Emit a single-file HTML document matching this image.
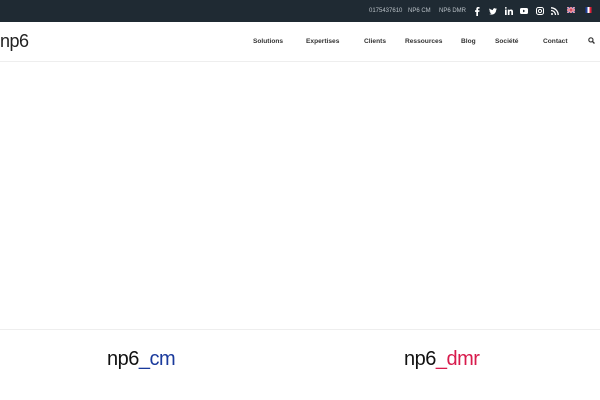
<!DOCTYPE html>
<html><head><meta charset="utf-8"><style>
*{margin:0;padding:0;box-sizing:border-box}
body{width:600px;height:400px;background:#fff;font-family:"Liberation Sans",sans-serif;position:relative;overflow:hidden}
.top{position:absolute;left:0;top:0;width:600px;height:22px;background:#1f2a33;color:#b9c0c6;font-size:6px}
.top span{position:absolute;top:7.5px}
.hdr{position:absolute;left:0;top:22px;width:600px;height:40px;border-bottom:1px solid #eee}
.nav{position:absolute;top:15px;font-size:6.6px;font-weight:bold;color:#333}
.logo{position:absolute;font-weight:300;letter-spacing:-0.5px}
.foot{position:absolute;left:0;top:329px;width:600px;border-top:1px solid #eee}
</style></head><body>
<div class="top">
<span style="left:369px">0175437610</span>
<span style="left:408px">NP6 CM</span>
<span style="left:439px">NP6 DMR</span>
<svg style="position:absolute;left:474px;top:7px" width="6" height="9" viewBox="0 0 6 9"><path d="M4 0H5.5V1.6H4.5C4.2 1.6 4 1.8 4 2.1V3.3H5.5L5.3 4.9H4V9H2.3V4.9H1V3.3H2.3V2C2.3 .8 3 0 4 0Z" fill="#fff"/></svg>
<svg style="position:absolute;left:489px;top:8px" width="8" height="7" viewBox="0 0 24 20"><path d="M24 2.4a10 10 0 0 1-2.8.8A5 5 0 0 0 23.3.4a10 10 0 0 1-3.1 1.2A4.9 4.9 0 0 0 11.8 6 14 14 0 0 1 1.7.9a4.9 4.9 0 0 0 1.5 6.6A4.9 4.9 0 0 1 1 6.9a4.9 4.9 0 0 0 3.9 4.8 5 5 0 0 1-2.2.1 4.9 4.9 0 0 0 4.6 3.4A9.9 9.9 0 0 1 0 17.3 14 14 0 0 0 7.5 19.5c9 0 14-7.5 14-14v-.6A10 10 0 0 0 24 2.4z" fill="#fff"/></svg>
<svg style="position:absolute;left:505px;top:7px" width="8" height="8" viewBox="0 0 8 8"><rect x="0" y="2.6" width="1.7" height="5.4" fill="#fff"/><circle cx=".85" cy=".9" r=".9" fill="#fff"/><path d="M2.8 2.6H4.4V3.4C4.7 2.8 5.4 2.5 6.1 2.5 7.5 2.5 8 3.3 8 4.8V8H6.3V5.2C6.3 4.5 6.1 4 5.5 4 4.9 4 4.5 4.4 4.5 5.2V8H2.8Z" fill="#fff"/></svg>
<svg style="position:absolute;left:520px;top:8px" width="8" height="6" viewBox="0 0 8 6"><rect width="8" height="6" rx="1.5" fill="#fff"/><path d="M3 1.6V4.4L5.3 3Z" fill="#1f2a33"/></svg>
<svg style="position:absolute;left:536px;top:7px" width="8" height="8" viewBox="0 0 8 8"><rect x=".5" y=".5" width="7" height="7" rx="2" fill="none" stroke="#fff"/><circle cx="4" cy="4" r="1.6" fill="none" stroke="#fff"/></svg>
<svg style="position:absolute;left:551px;top:7px" width="8" height="8" viewBox="0 0 8 8"><circle cx="1" cy="7" r="1" fill="#fff"/><path d="M0 3.5A4.5 4.5 0 0 1 4.5 8M0 .8A7.2 7.2 0 0 1 7.2 8" fill="none" stroke="#fff" stroke-width="1.3"/></svg>
<svg style="position:absolute;left:567px;top:7px" width="8" height="6" viewBox="0 0 8 6"><rect width="8" height="6" fill="#2a3b8f"/><path d="M0 0L8 6M8 0L0 6" stroke="#fff" stroke-width="1.4"/><path d="M0 0L8 6M8 0L0 6" stroke="#c8102e" stroke-width=".5"/><path d="M4 0V6M0 3H8" stroke="#fff" stroke-width="2"/><path d="M4 0V6M0 3H8" stroke="#c8102e" stroke-width="1"/></svg>
<svg style="position:absolute;left:585px;top:7px" width="7" height="6" viewBox="0 0 6 6"><rect width="2" height="6" fill="#1d3d9a"/><rect x="2" width="2" height="6" fill="#fff"/><rect x="4" width="2" height="6" fill="#e0213a"/></svg>
</div>
<div class="hdr">
<div class="logo" style="left:0;top:9px;font-size:18px;color:#222">np6</div>
<span class="nav" style="left:253px;top:15.5px">Solutions</span>
<span class="nav" style="left:306px;top:15.5px">Expertises</span>
<span class="nav" style="left:364px;top:15.5px">Clients</span>
<span class="nav" style="left:405px;top:15.5px">Ressources</span>
<span class="nav" style="left:461px;top:15.5px">Blog</span>
<span class="nav" style="left:495px;top:15.5px">Société</span>
<span class="nav" style="left:543px;top:15.5px">Contact</span>
<svg style="position:absolute;left:588px;top:15px" width="7" height="7" viewBox="0 0 8 8"><circle cx="3.3" cy="3.3" r="2.4" fill="none" stroke="#333" stroke-width="1.3"/><path d="M5 5L7.4 7.4" stroke="#333" stroke-width="1.5"/></svg>
</div>
<div class="foot"></div>
<div class="logo" style="left:107px;top:348px;font-size:20px;color:#111">np6<span style="color:#1a3a9c">_cm</span></div>
<div class="logo" style="left:404px;top:348px;font-size:20px;color:#111">np6<span style="color:#d81b4c">_dmr</span></div>
</body></html>
